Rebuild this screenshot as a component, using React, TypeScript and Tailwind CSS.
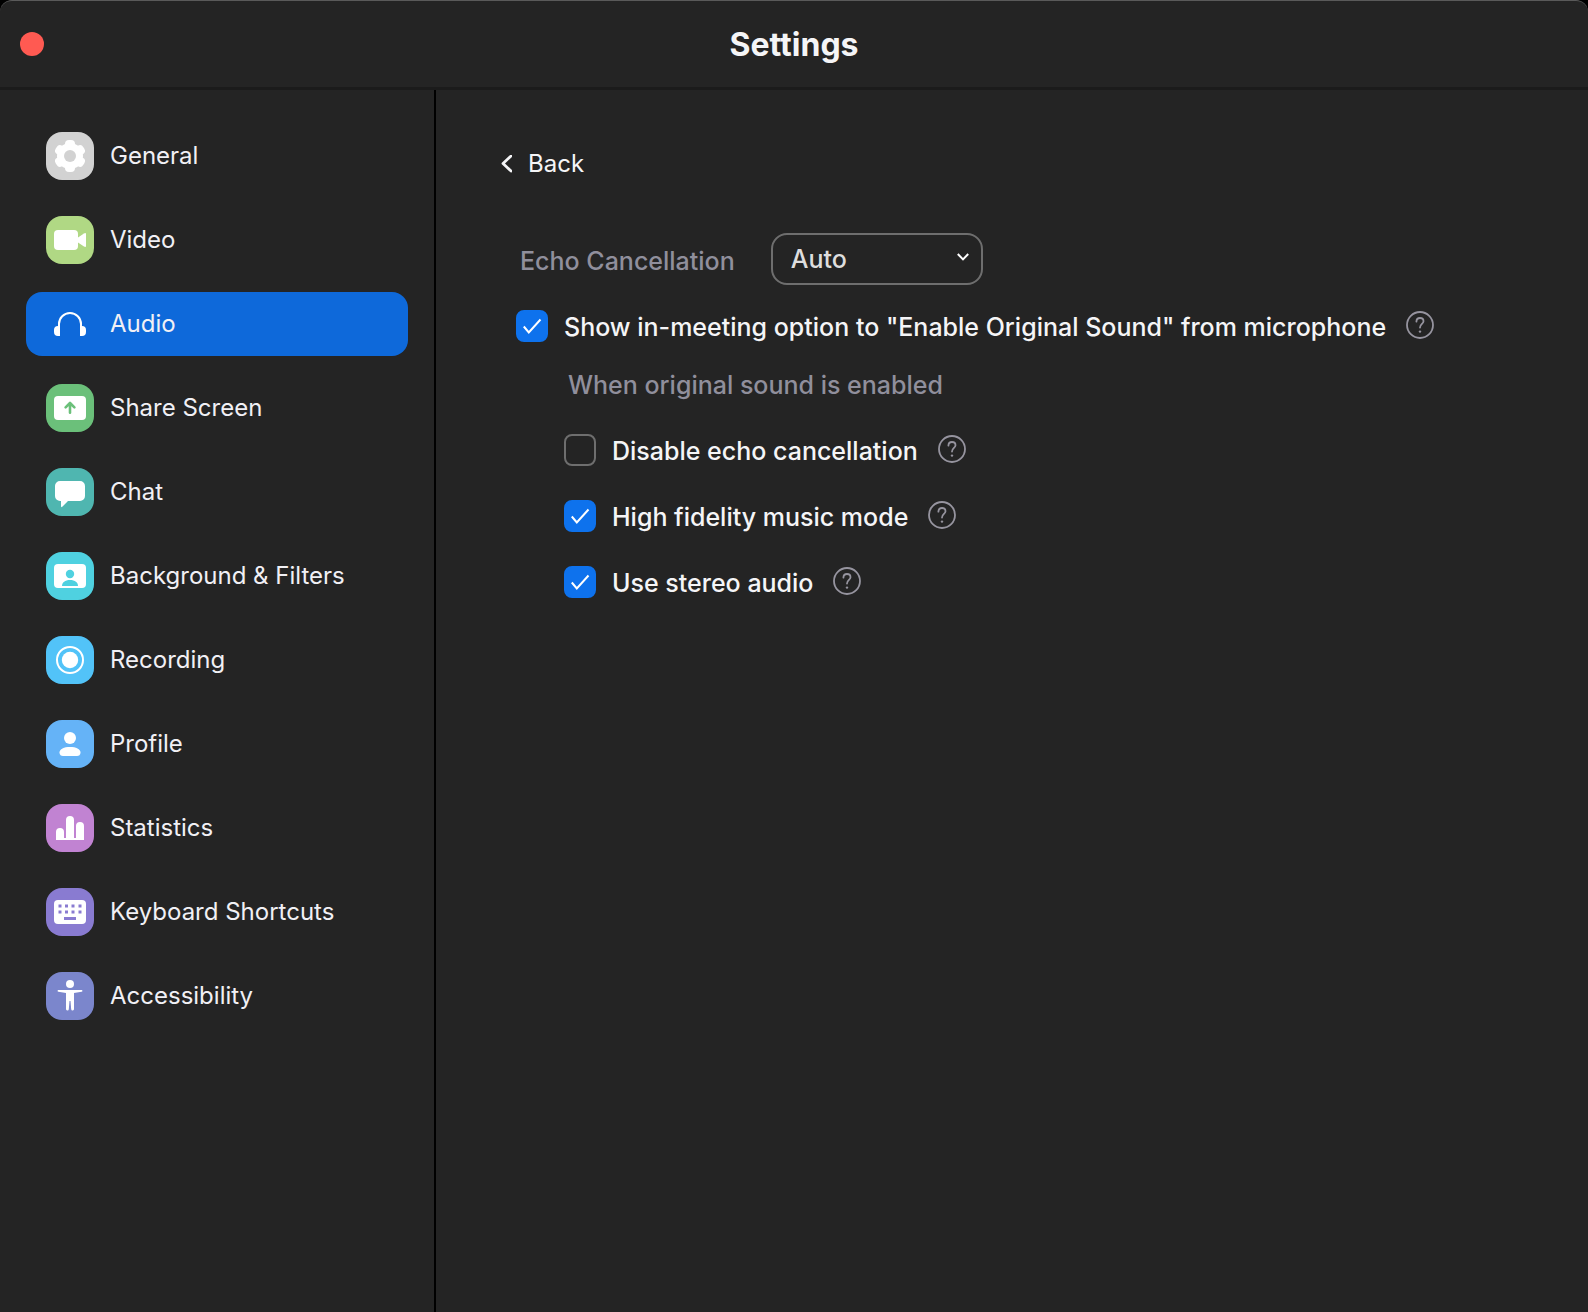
import { useId, useState } from "react";
import type { ReactNode } from "react";
import clsx from "clsx";

type NavItem = {
  label: string;
  tile: string;
  icon: ReactNode;
};

const NAV_ITEMS: NavItem[] = [
  {
    label: "General",
    tile: "bg-[#d2d2d2]",
    icon: (
      <>
        <g fill="#fff">
          <circle cx="24" cy="24" r="13" />
          <rect x="19" y="8" width="10" height="32" rx="4" />
          <rect x="19" y="8" width="10" height="32" rx="4" transform="rotate(60 24 24)" />
          <rect x="19" y="8" width="10" height="32" rx="4" transform="rotate(120 24 24)" />
        </g>
        <circle cx="24" cy="24" r="6" fill="#d2d2d2" />
      </>
    ),
  },
  {
    label: "Video",
    tile: "bg-[#b0d884]",
    icon: (
      <g fill="#fff">
        <rect x="8" y="14" width="24" height="20" rx="4" />
        <path d="M32 21.5 38 17.4Q40 16.400 40 18V30Q40 31.600 38 30.600L32 26.500Z" />
      </g>
    ),
  },
  {
    label: "Audio",
    tile: "bg-transparent",
    icon: (
      <>
        <path d="M13 28V24a11 11 0 0 1 22 0v4" fill="none" stroke="#fff" strokeWidth="2" />
        <path
          d="M12 26h2v10h-2a4 4 0 0 1-4-4v-2a4 4 0 0 1 4-4ZM36 26h-2v10h2a4 4 0 0 0 4-4v-2a4 4 0 0 0-4-4Z"
          fill="#fff"
        />
      </>
    ),
  },
  {
    label: "Share Screen",
    tile: "bg-[#6bc07a]",
    icon: (
      <>
        <rect x="8" y="12" width="32" height="24" rx="4" fill="#fff" />
        <path
          d="M24 28.800V19.500M19.600 23.400 24 19l4.400 4.400"
          fill="none"
          stroke="#6bc07a"
          strokeWidth="2.600"
          strokeLinecap="round"
          strokeLinejoin="round"
        />
      </>
    ),
  },
  {
    label: "Chat",
    tile: "bg-[#4fb6b0]",
    icon: (
      <path
        d="M14 13H34a5 5 0 0 1 5 5V28a5 5 0 0 1-5 5H22L16 39Q15 39.500 15 38V33H14a5 5 0 0 1-5-5V18a5 5 0 0 1 5-5Z"
        fill="#fff"
      />
    ),
  },
  {
    label: "Background & Filters",
    tile: "bg-[#4fd1e0]",
    icon: (
      <>
        <rect x="8" y="12" width="32" height="24" rx="4" fill="#fff" />
        <g fill="#4fd1e0">
          <circle cx="24" cy="22" r="4.200" />
          <path d="M16 34c0-3.600 3-6 8-6s8 2.400 8 6Z" />
        </g>
      </>
    ),
  },
  {
    label: "Recording",
    tile: "bg-[#52c3f8]",
    icon: (
      <>
        <circle cx="24" cy="24" r="13" fill="none" stroke="#fff" strokeWidth="2" />
        <circle cx="24" cy="24" r="8.200" fill="#fff" />
      </>
    ),
  },
  {
    label: "Profile",
    tile: "bg-[#65b3f7]",
    icon: (
      <g fill="#fff">
        <circle cx="24" cy="18" r="6" />
        <path d="M13.500 32.500C13.500 29 18 27 24 27s10.500 2 10.500 5.500C34.500 35 33 36 31 36H17c-2 0-3.500-1-3.500-3.500Z" />
      </g>
    ),
  },
  {
    label: "Statistics",
    tile: "bg-[#c183d2]",
    icon: (
      <path
        d="M10 36V28a4 4 0 0 1 8 0v6h2V16a4 4 0 0 1 8 0v18h2V22a4 4 0 0 1 8 0v14Z"
        fill="#fff"
      />
    ),
  },
  {
    label: "Keyboard Shortcuts",
    tile: "bg-[#897bd1]",
    icon: (
      <>
        <rect x="8" y="12" width="32" height="24" rx="4" fill="#fff" />
        <path
          d="M12.500 18h3M19 18h3M25.500 18h3M32.500 18h3M12.500 24h3M19 24h3M25.500 24h3M32.500 24h3M18 30.500h12"
          stroke="#897bd1"
          strokeWidth="3"
        />
      </>
    ),
  },
  {
    label: "Accessibility",
    tile: "bg-[#7b86cc]",
    icon: (
      <g fill="#fff">
        <circle cx="24" cy="12" r="4" />
        <path d="M12.500 18h23a.9.9 0 0 1 .1 1.800L28 21V37a1 1 0 0 1-2.800.2L24.500 29h-1l-.7 8.200A1 1 0 0 1 20 37V21l-7.600-1.200a.9.9 0 0 1 .1-1.800Z" />
      </g>
    ),
  },
];

function HelpButton({ topic }: { topic: string }) {
  return (
    <button type="button" aria-label={`Help: ${topic}`} className="mb-0.5 ml-1 shrink-0">
      <svg viewBox="0 0 28 28" className="size-7" fill="none" stroke="#96949f">
        <circle cx="14" cy="14" r="13" strokeWidth="1.800" />
        <path
          d="M10.400 10.600C10.500 8.200 12 7 14 7s3.500 1.300 3.500 3.300c0 2.500-3.500 2.900-3.500 6.200"
          strokeWidth="1.800"
          strokeLinecap="round"
        />
        <circle cx="14" cy="20.600" r="1.200" fill="#96949f" stroke="none" />
      </svg>
    </button>
  );
}

function CheckOption({ label, defaultChecked = false }: { label: string; defaultChecked?: boolean }) {
  const id = useId();

  return (
    <div className="flex items-center gap-4">
      <span className="grid shrink-0">
        <input
          id={id}
          type="checkbox"
          defaultChecked={defaultChecked}
          className="peer col-start-1 row-start-1 size-8 appearance-none rounded-lg border-2 border-[#6e6e6e] checked:border-[#0e72ed] checked:bg-[#0e72ed]"
        />
        <svg
          viewBox="0 0 32 32"
          className="pointer-events-none invisible col-start-1 row-start-1 size-8 peer-checked:visible"
          fill="none"
          stroke="#fff"
          strokeWidth="2"
        >
          <path d="M7.800 16.500 12.800 22.500 24.500 9.500" />
        </svg>
      </span>
      <label htmlFor={id} className="pt-0.5 leading-8">
        {label}
      </label>
      <HelpButton topic={label} />
    </div>
  );
}

function Sidebar() {
  const [active, setActive] = useState("Audio");

  return (
    <nav className="w-[436px] shrink-0 border-r-2 border-black px-[26px] pt-[34px]">
      <ul className="flex flex-col gap-5">
        {NAV_ITEMS.map((item) => (
          <li key={item.label}>
            <button
              type="button"
              onClick={() => setActive(item.label)}
              className={clsx(
                "flex h-16 w-full items-center gap-4 rounded-2xl px-5 text-left text-2xl text-[#f1f0f5]",
                active === item.label && "bg-[#0e69da]"
              )}
            >
              <svg viewBox="0 0 48 48" className={clsx("size-12 shrink-0 rounded-2xl", item.tile)}>
                {item.icon}
              </svg>
              {item.label}
            </button>
          </li>
        ))}
      </ul>
    </nav>
  );
}

export default function App() {
  return (
    <div className="min-h-screen bg-black font-['Inter',sans-serif]">
      <div className="flex min-h-screen flex-col rounded-t-xl border-t border-[#5a5a5a] bg-[#242424] text-[#f5f5f7]">
        <header className="grid h-[89px] shrink-0 grid-cols-[1fr_auto_1fr] items-center border-b-3 border-[#1b1b1b] px-5">
          <button type="button" aria-label="Close" className="size-6 rounded-full bg-[#ff5a52]" />
          <h1 className="pt-0.5 text-[32px] font-bold">Settings</h1>
        </header>

        <div className="flex grow">
          <Sidebar />

          <main className="min-w-0 grow px-16 pt-14 text-[25px] font-medium">
            <button type="button" className="flex items-center gap-4 text-2xl leading-9 font-normal">
              <svg viewBox="0 0 12 18" className="h-[18px] w-3" fill="none" stroke="currentColor" strokeWidth="2.800">
                <path d="M11 1 3 8.500l8 7.500" strokeLinecap="round" strokeLinejoin="round" />
              </svg>
              Back
            </button>

            {/* Echo cancellation mode */}
            <div className="mt-[51px] flex items-center gap-9 pl-5">
              <label htmlFor="echo-mode" className="pt-1.5 text-[#908f9c]">
                Echo Cancellation
              </label>
              <div className="relative">
                <select
                  id="echo-mode"
                  className="h-[52px] w-[212px] appearance-none rounded-2xl border-2 border-[#6e6e6e] px-[18px] pt-0.5 text-[#dedede]"
                >
                  <option>Auto</option>
                  <option>Low</option>
                  <option>High</option>
                </select>
                <svg
                  viewBox="0 0 12 8"
                  className="pointer-events-none absolute top-5 right-3.5 h-2 w-3"
                  fill="none"
                  stroke="#fff"
                  strokeWidth="2"
                >
                  <path d="M.8 1 6 6.400 11.200 1" />
                </svg>
              </div>
            </div>

            {/* Original sound options */}
            <div className="mt-6 pl-4">
              <CheckOption label={'Show in-meeting option to "Enable Original Sound" from microphone'} defaultChecked />
              <fieldset className="mt-6 pl-12">
                <legend className="pl-1 leading-9 text-[#908f9c]">When original sound is enabled</legend>
                <div className="mt-[30px] flex flex-col gap-8">
                  <CheckOption label="Disable echo cancellation" />
                  <CheckOption label="High fidelity music mode" defaultChecked />
                  <CheckOption label="Use stereo audio" defaultChecked />
                </div>
              </fieldset>
            </div>
          </main>
        </div>
      </div>
    </div>
  );
}
